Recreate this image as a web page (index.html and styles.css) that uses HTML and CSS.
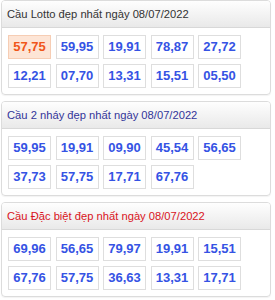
FILE: index.html
```html
<!DOCTYPE html>
<html lang="vi">
<head>
<meta charset="utf-8">
<title>Cầu lô tô</title>
<link rel="stylesheet" href="styles.css">
</head>
<body>
<div class="panel">
  <div class="panel-head head-gray">Cầu Lotto đẹp nhất ngày 08/07/2022</div>
  <div class="cells">
    <span class="cell hot">57,75</span>
    <span class="cell">59,95</span>
    <span class="cell">19,91</span>
    <span class="cell">78,87</span>
    <span class="cell">27,72</span>
    <span class="cell">12,21</span>
    <span class="cell">07,70</span>
    <span class="cell">13,31</span>
    <span class="cell">15,51</span>
    <span class="cell">05,50</span>
  </div>
</div>
<div class="panel">
  <div class="panel-head head-blue">Cầu 2 nháy đẹp nhất ngày 08/07/2022</div>
  <div class="cells">
    <span class="cell">59,95</span>
    <span class="cell">19,91</span>
    <span class="cell">09,90</span>
    <span class="cell">45,54</span>
    <span class="cell">56,65</span>
    <span class="cell">37,73</span>
    <span class="cell">57,75</span>
    <span class="cell">17,71</span>
    <span class="cell">67,76</span>
  </div>
</div>
<div class="panel">
  <div class="panel-head head-red">Cầu Đặc biệt đẹp nhất ngày 08/07/2022</div>
  <div class="cells">
    <span class="cell">69,96</span>
    <span class="cell">56,65</span>
    <span class="cell">79,97</span>
    <span class="cell">19,91</span>
    <span class="cell">15,51</span>
    <span class="cell">67,76</span>
    <span class="cell">57,75</span>
    <span class="cell">36,63</span>
    <span class="cell">13,31</span>
    <span class="cell">17,71</span>
  </div>
</div>
</body>
</html>
```
FILE: styles.css
```css
html, body {
  margin: 0;
  padding: 0;
  background: #fff;
}
body {
  padding: 0 4px 0 1px;
  font-family: "Liberation Sans", Arial, sans-serif;
}
.panel {
  width: 270px;
  box-sizing: border-box;
  border: 1px solid #dcdcdc;
  border-radius: 4px;
  margin-bottom: 6px;
  box-shadow: 0 1px 1px rgba(0,0,0,0.05);
  overflow: hidden;
}
.panel-head {
  height: 26px;
  line-height: 27px;
  padding-left: 5px;
  font-size: 11.2px;
  background: linear-gradient(#fefefe, #e9e9e9);
  border-bottom: 1px solid #d8d8d8;
  white-space: nowrap;
}
.head-gray { color: #333; }
.head-blue { color: #33359a; }
.head-red { color: #d9141c; }
.cells {
  display: grid;
  grid-template-columns: repeat(5, 43px);
  column-gap: 4.5px;
  row-gap: 5px;
  padding: 7px 6px 6px 6px;
}
.cell {
  height: 24px;
  box-sizing: border-box;
  border: 1px solid #dedede;
  background: #fff;
  text-align: center;
  line-height: 22px;
  font-size: 13px;
  font-weight: bold;
  color: #3553e4;
}
.cell.hot {
  background: #fde5d6;
  border-color: #f6cdb4;
  color: #f0561a;
}
```
